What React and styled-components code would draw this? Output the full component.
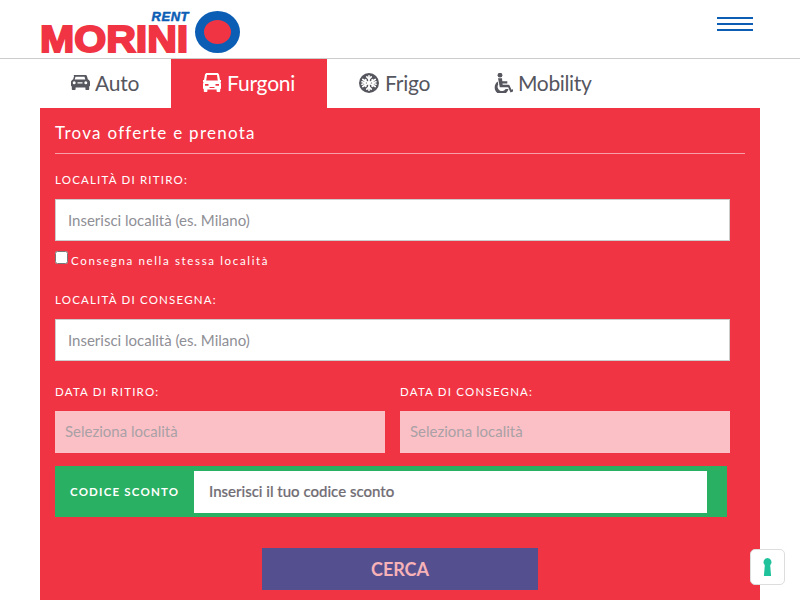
import React from "react";
import styled, { createGlobalStyle } from "styled-components";

const Global = createGlobalStyle`
  html, body { margin: 0; padding: 0; height: 100%; overflow: hidden; background: #fff; }
  body { font-family: "Lato", "Open Sans", sans-serif; }
  * { box-sizing: border-box; }
  input::placeholder { color: inherit; opacity: 1; }
`;
const Page = styled.div`width: 800px; height: 600px; overflow: hidden; position: relative;`;
const Header = styled.header`
  height: 59px; border-bottom: 1px solid #ccc; padding: 0 47px 0 41px;
  display: flex; justify-content: space-between; align-items: flex-start;
`;
const Logo = styled.div`display: flex; align-items: flex-start; padding-top: 11px; height: 58px;`;
const Wordmark = styled.div`width: 148px; height: 42px; display: flex; flex-direction: column; align-items: flex-end;`;
const Rent = styled.span`
  height: 12px; font: italic 900 13px/12px "Liberation Sans", sans-serif;
  -webkit-text-stroke: .5px #0c5eb5; letter-spacing: .5px; color: #0c5eb5;
`;
const Morini = styled.span`
  display: block; height: 30px; align-self: flex-start; font: 900 37.5px/32px "Liberation Sans", sans-serif;
  color: #f13444; -webkit-text-stroke: 2px #f13444; transform-origin: 0 0; transform: translateX(-1px) scaleX(1.095);
  white-space: nowrap;
`;
const Roundel = styled.div`
  width: 45px; height: 42px; margin-left: 6px; border-radius: 50%; border: 9px solid #0c5eb5; background: #f13444;
`;
const Burger = styled.div`
  width: 36px; margin-top: 17px; display: flex; flex-direction: column; gap: 4px;
  i { display: block; height: 2px; background: #0c5eb5; }
`;
const Tabs = styled.nav`display: flex; height: 49px; margin-left: 40px;`;
const Tab = styled.div`
  display: flex; align-items: center; gap: ${p => p.$gap || 6}px; padding: 0 ${p => p.$pad || 30}px 2px;
  font-size: 21px; font-weight: 400; white-space: nowrap; letter-spacing: ${p => p.$ls ?? -0.2}px;
  color: ${p => (p.$active ? "#fff" : "#56565f")}; background: ${p => (p.$active ? "#f13444" : "transparent")};
  width: ${p => p.$w}px;
  svg { flex: none; }
`;
const Panel = styled.main`
  width: 720px; margin-left: 40px; background: #f13444; height: 492px; padding: 14px 15px 0;
`;
const Title = styled.h2`
  margin: 0; height: 32px; border-bottom: 1px solid #f8a0a8; color: #fff; font-size: 17px; font-weight: 400;
  letter-spacing: 1.27px; line-height: 21px;
`;
const Label = styled.label`
  display: block; color: #fff; font-size: 11.5px; line-height: 14px; letter-spacing: 1.2px; text-transform: uppercase;
  margin-top: ${p => p.$top || 0}px; margin-bottom: 12px;
`;
const Input = styled.input`
  display: block; width: 675px; height: 42px; padding: 0 12px; border: 1px solid #ccc; background: #fff;
  font: 400 15px "Lato", sans-serif; color: #8f8f96; outline: none;
`;
const CheckRow = styled.div`display: flex; align-items: flex-start; height: 18px; margin-top: 10px;`;
const Check = styled.input`width: 13px; height: 13px; margin: 0 3px 0 0;`;
const CheckText = styled.span`color: #fff; font-size: 11.5px; letter-spacing: 1.65px; line-height: 14px; margin-top: 3px;`;
const Dates = styled.div`display: grid; grid-template-columns: 330px 330px; column-gap: 15px; margin-top: 24px;`;
const DateCol = styled.div``;
const DateBox = styled.input`
  display: block; width: 330px; height: 42px; border: 0; padding: 0 10px 2px; background: #fbc0c6; color: #a9a1a5;
  font: 400 15px "Lato", sans-serif; outline: none;
`;
const Promo = styled.div`
  width: 672px; height: 51px; margin-top: 13px; background: #29b062; display: flex; align-items: center; padding: 0 20px 0 15px;
`;
const PromoLabel = styled.span`
  width: 124px; flex: none; color: #fff; font-size: 11.5px; font-weight: 700; letter-spacing: 1.2px; white-space: nowrap;
`;
const PromoInput = styled.input`
  flex: 1; height: 42px; border: 0; padding: 0 15px 1px; background: #fff; color: #716d74;
  font: 500 15px "Lato", sans-serif; outline: none; -webkit-text-stroke: .2px #716d74;
`;
const Search = styled.button`
  display: block; width: 276px; height: 42px; margin: 31px auto 0 207px; border: 0; background: #544f8f; color: #f7b2b8;
  font: 700 18px "Lato", sans-serif;
`;
const Float = styled.div`
  position: absolute; left: 750px; top: 549px; width: 35px; height: 36px; background: #fff; border: 1px solid #ddd; border-radius: 5px;
  display: flex; align-items: center; justify-content: center;
`;

const CarIcon = () => (
  <svg width="20" height="15" viewBox="0 0 20 15" fill="#56565f">
    <path fillRule="evenodd" d="M4.6 0h10.8c.8 0 1.3.5 1.5 1.1l1 3.4c1 .3 2.1 1.3 2.1 2.6v3.4c0 .5-.3.8-.8.9V14c0 .6-.4 1-1 1h-1.8c-.6 0-1-.4-1-1v-1.6H5.6V14c0 .6-.4 1-1 1H2.800c-.6 0-1-.4-1-1v-2.600c-.5-.1-.8-.4-.8-.9V7.100c0-1.300 1.100-2.300 2.100-2.600l1-3.400C3.300.5 3.800 0 4.600 0zM5.500 1.800L4.700 4.400h10.600l-.8-2.600H5.500zM4.200 6.300a1.500 1.500 0 1 0 0 3 1.500 1.500 0 0 0 0-3zm11.600 0a1.500 1.500 0 1 0 0 3 1.500 1.500 0 0 0 0-3zM7.500 7.200v1.400h5V7.200h-5z" />
  </svg>
);
const VanIcon = () => (
  <svg width="18" height="19" viewBox="0 0 18 19" fill="#fff">
    <path fillRule="evenodd" d="M4 0h10c1 0 1.700.6 2 1.500l1 5.500h1v2h-.7c.4.500.7 1.100.7 1.800V15c0 .600-.3 1-.8 1.200V18c0 .6-.4 1-1 1h-1.600c-.6 0-1-.4-1-1v-1.500H4.400V18c0 .6-.4 1-1 1H1.800c-.6 0-1-.4-1-1v-1.800C.3 16 0 15.600 0 15v-4.200c0-.7.300-1.300.7-1.800H0V7h1l1-5.500C2.300.6 3 0 4 0zM4 2L3.200 7.500h11.600L14 2H4zM2 11v1.800h3.500V11H2zm10.500 0v1.800H16V11h-3.500zM6.500 14v1h5v-1h-5z" />
  </svg>
);
const SnowIcon = () => (
  <svg width="20" height="20" viewBox="0 0 20 20">
    <circle cx="10" cy="10" r="10" fill="#56565f" />
    <g stroke="#fff" strokeWidth="1.700" fill="none" strokeLinecap="round">
      <path d="M10 2.800v14.400M3.800 6.400l12.400 7.200M16.200 6.400L3.800 13.600" />
      <path d="M7.800 3.800L10 6l2.200-2.200M7.800 16.200L10 14l2.200 2.200M3 8.800l3 .9.800-3M17 11.200l-3-.9-.8 3M17 8.800l-3 .9-.8-3M3 11.200l3-.9.800 3" />
    </g>
  </svg>
);
const ChairIcon = () => (
  <svg width="19" height="20" viewBox="0 0 19 20" fill="#56565f">
    <circle cx="6" cy="2.200" r="2.400" />
    <path d="M4 5.200h4l.3 3h5v2.200H8.500l.2 1.400h5.800c.5 0 .9.300 1.100.7l1.900 4.200 1.300-.5.900 1.900-3.200 1.400-2.300-5.200H5.800z" />
    <path d="M3.800 8.600l.4 3a4.300 4.300 0 1 0 7.400 4.400h2.900A7 7 0 1 1 3.800 8.600z" />
  </svg>
);

export default function App() {
  return (
    <Page>
      <Global />
      <Header>
        <Logo>
          <Wordmark>
            <Rent>RENT</Rent>
            <Morini>MORINI</Morini>
          </Wordmark>
          <Roundel />
        </Logo>
        <Burger><i /><i /><i /></Burger>
      </Header>
      <Tabs>
        <Tab $w={131} $gap={5}><CarIcon />Auto</Tab>
        <Tab $w={156} $active $pad={32}><VanIcon />Furgoni</Tab>
        <Tab $w={135} $pad={32}><SnowIcon />Frigo</Tab>
        <Tab $pad={32} $gap={5} $ls={-0.35}><ChairIcon />Mobility</Tab>
      </Tabs>
      <Panel>
        <Title>Trova offerte e prenota</Title>
        <Label $top={19}>Località di ritiro:</Label>
        <Input placeholder="Inserisci località (es. Milano)" />
        <CheckRow><Check type="checkbox" /><CheckText>Consegna nella stessa località</CheckText></CheckRow>
        <Label $top={24}>Località di consegna:</Label>
        <Input placeholder="Inserisci località (es. Milano)" />
        <Dates>
          <DateCol><Label>Data di ritiro:</Label><DateBox placeholder="Seleziona località" /></DateCol>
          <DateCol><Label>Data di consegna:</Label><DateBox placeholder="Seleziona località" /></DateCol>
        </Dates>
        <Promo>
          <PromoLabel>CODICE SCONTO</PromoLabel>
          <PromoInput placeholder="Inserisci il tuo codice sconto" />
        </Promo>
        <Search>CERCA</Search>
      </Panel>
      <Float>
        <svg width="11" height="18" viewBox="0 0 12 20"><path d="M6 0a4.600 4.600 0 0 1 3 8l1 12H2L3 8a4.600 4.600 0 0 1 3-8z" fill="#1fc29a" /></svg>
      </Float>
    </Page>
  );
}
